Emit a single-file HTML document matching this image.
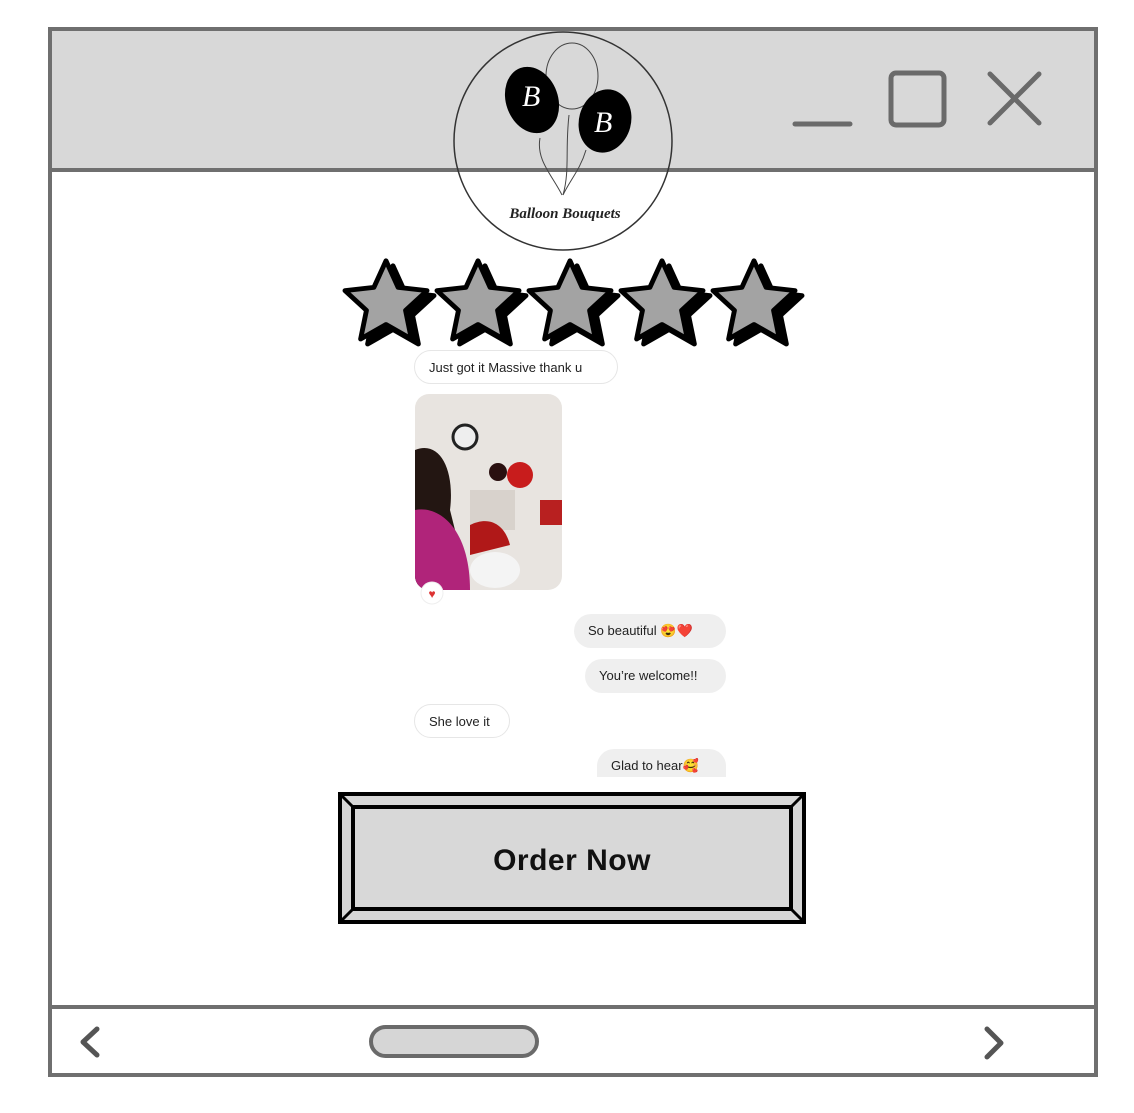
<!DOCTYPE html>
<html><head><style>
body{margin:0;width:1134px;height:1113px;background:#fff;position:relative;overflow:hidden;font-family:"Liberation Sans",sans-serif}
.a{position:absolute}
.bub{position:absolute;height:34px;border-radius:17px;font-size:13px;line-height:34px;padding:0 14px;color:#222;box-sizing:border-box}
.l{background:#fff;border:1px solid #e6e6e6}
.r{background:#efefef}
</style></head><body>
<div class="a" style="left:48px;top:27px;width:1050px;height:1050px;box-sizing:border-box;border:4px solid #6f6f6f"></div>
<div class="a" style="left:52px;top:31px;width:1042px;height:137px;background:#d8d8d8;border-bottom:4px solid #6f6f6f"></div>
<div class="a" style="left:52px;top:1005px;width:1042px;height:4px;background:#6f6f6f"></div>
<svg class="a" style="left:0;top:0" width="1134" height="1113">
<line x1="795" y1="124" x2="850" y2="124" stroke="#6a6a6a" stroke-width="5" stroke-linecap="round"/>
<rect x="891" y="73" width="53" height="52" rx="5" fill="none" stroke="#6a6a6a" stroke-width="5"/>
<path d="M990 74 L1039 123 M1039 74 L990 123" stroke="#6a6a6a" stroke-width="5" stroke-linecap="round"/>
<circle cx="563" cy="141" r="109" fill="none" stroke="#333" stroke-width="1.5"/>
<ellipse cx="572" cy="76" rx="26" ry="33" fill="none" stroke="#444" stroke-width="1"/>
<ellipse cx="532" cy="100" rx="26" ry="34" transform="rotate(-20 532 100)" fill="#000"/>
<ellipse cx="605" cy="121" rx="26" ry="32" transform="rotate(15 605 121)" fill="#000"/>
<path d="M540 138 C536 160 552 175 562 195 M569 115 C565 150 570 170 563 195 M586 150 C580 170 570 180 563 195" stroke="#444" fill="none" stroke-width="1"/>
<text x="522" y="106" font-family="Liberation Serif" font-style="italic" font-size="30" fill="#fff">B</text>
<text x="594" y="132" font-family="Liberation Serif" font-style="italic" font-size="30" fill="#fff">B</text>
<text x="565" y="218" text-anchor="middle" font-family="Liberation Serif" font-style="italic" font-weight="bold" font-size="15" fill="#222">Balloon Bouquets</text>
<defs><polygon id="sp" points="0,-40 11.2,-15.4 38,-12.4 18.1,5.9 23.5,32.4 0,19 -23.5,32.4 -18.1,5.9 -38,-12.4 -11.2,-15.4"/></defs>
<g id="st">
<use href="#sp" transform="translate(393 309) scale(1.08)" fill="#000" stroke="#000" stroke-width="4.5" stroke-linejoin="round"/>
<use href="#sp" transform="translate(386 304) scale(1.08)" fill="#a3a3a3" stroke="#000" stroke-width="4.5" stroke-linejoin="round"/>
</g>
<use href="#st" x="92"/><use href="#st" x="184"/><use href="#st" x="276"/><use href="#st" x="368"/>
<defs><clipPath id="cp"><rect x="415" y="394" width="147" height="196" rx="14"/></clipPath></defs>
<g clip-path="url(#cp)">
<rect x="415" y="394" width="147" height="196" fill="#e8e4e0"/>
<circle cx="465" cy="437" r="12" fill="#eee" stroke="#222" stroke-width="3"/>
<path d="M415 450 C440 440 455 470 450 510 L470 590 L415 590Z" fill="#231612"/>
<path d="M415 510 C440 505 470 530 470 590 L415 590Z" fill="#b0247a"/>
<rect x="470" y="490" width="45" height="40" fill="#d8d2cc"/>
<circle cx="520" cy="475" r="13" fill="#c81c1c"/>
<circle cx="498" cy="472" r="9" fill="#2a1010"/>
<path d="M470 525 C490 515 505 525 510 545 L470 555Z" fill="#b01818"/>
<ellipse cx="495" cy="570" rx="25" ry="18" fill="#f4f4f4"/>
<rect x="540" y="500" width="22" height="25" fill="#b82020"/>
</g>
<circle cx="432" cy="593" r="11" fill="#fff" stroke="#eee"/>
<text x="432" y="598" text-anchor="middle" font-size="12" fill="#d33">♥</text>
<rect x="340" y="794" width="464" height="128" fill="#d6d6d6" stroke="#000" stroke-width="4"/>
<rect x="353" y="807" width="438" height="102" fill="#d8d8d8" stroke="#000" stroke-width="4"/>
<path d="M340 794 L353 807 M804 794 L791 807 M340 922 L353 909 M804 922 L791 909" stroke="#000" stroke-width="3"/>
<text x="572" y="870" text-anchor="middle" font-size="30" font-weight="bold" fill="#111" letter-spacing="0.5">Order Now</text>
<path d="M97 1029 L83 1042 L97 1055" stroke="#555" stroke-width="5" fill="none" stroke-linecap="round" stroke-linejoin="round"/>
<path d="M987 1029 L1001 1043 L987 1057" stroke="#555" stroke-width="5" fill="none" stroke-linecap="round" stroke-linejoin="round"/>
<rect x="371" y="1027" width="166" height="29" rx="14.5" fill="#d6d6d6" stroke="#6a6a6a" stroke-width="4"/>
</svg>
<div class="bub l" style="left:414px;top:350px;width:204px">Just got it Massive thank u</div>
<div class="bub r" style="left:574px;top:614px;width:152px">So beautiful 😍❤️</div>
<div class="bub r" style="left:585px;top:659px;width:141px">You’re welcome!!</div>
<div class="bub l" style="left:414px;top:704px;width:96px">She love it</div>
<div class="bub r" style="left:597px;top:749px;width:129px;height:28px;border-radius:17px 17px 0 0;overflow:hidden">Glad to hear🥰</div>
</body></html>
